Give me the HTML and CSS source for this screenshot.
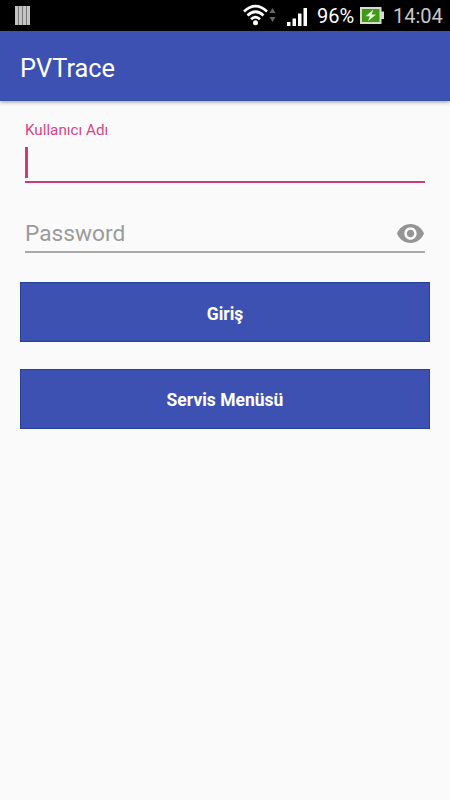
FILE: index.html
```html
<!DOCTYPE html>
<html lang="tr">
<head>
    <meta charset="UTF-8" />
    <meta name="viewport" content="width=device-width, initial-scale=1.0"/>
    <title>PVTrace</title>
    <link rel="stylesheet" href="styles.css">
</head>
<body>
<div class="status-bar">
    <svg class="bars" width="15" height="19" viewBox="0 0 15 19">
        <path fill="#777" d="M0 0h15v19H0z"/>
        <path fill="#c4c4c4" d="M0 0h3v19H0zM4 0h3v19H4zM8 0h3v19H8zM12 0h3v19h-3z"/>
    </svg>
    <svg class="wifi" width="34" height="22" viewBox="0 0 34 22">
        <g fill="none" stroke="#fff" stroke-width="2.7">
            <path d="M1 7.500Q12.500-3.200 24 7.500"/>
            <path d="M4.500 11.500Q12.500 4 20.500 11.500"/>
            <path d="M8 15.200Q12.500 11 17 15.200"/>
        </g>
        <circle cx="12.500" cy="18.700" r="2.500" fill="#fff"/>
        <path fill="#666" d="M26.500 9l3-5 3 5zM26.500 13l3 5 3-5z"/>
    </svg>
    <svg class="signal" width="21" height="18" viewBox="0 0 21 18">
        <path fill="#fff" d="M0 14h3.500v4H0zM5.500 10.500H9V18H5.500zM11 5.500h3.500V18H11zM16.500 0H20v18h-3.500z"/>
    </svg>
    <span class="percent">96%</span>
    <svg class="battery" width="24" height="17" viewBox="0 0 24 17">
        <path fill="#d5dccf" d="M0 0h21.500v4.500H24v7.500h-2.500V17H0z"/>
        <path fill="#3f9a16" d="M2 2h17.500v13H2z"/>
        <path fill="#e8f3df" d="M13.500 2.500L5.500 9.300h4.300L8 14.300l8-6.700h-4.500z"/>
    </svg>
    <span class="clock">14:04</span>
</div>
<header class="app-bar">
    <h1>PVTrace</h1>
</header>
<form class="login-form">
    <label class="field-label" for="username">Kullanıcı Adı</label>
    <div class="field field-active">
        <span class="caret"></span>
        <input type="text" id="username" name="username" />
    </div>
    <div class="field field-password">
        <input type="password" id="password" name="password" placeholder="Password" />
        <svg class="eye" width="27" height="19" viewBox="1 4.500 22 15" preserveAspectRatio="none">
            <path fill="#959595" d="M12 4.500C7 4.500 2.730 7.610 1 12c1.730 4.390 6 7.500 11 7.500s9.270-3.110 11-7.500c-1.730-4.390-6-7.500-11-7.500zM12 17c-2.760 0-5-2.240-5-5s2.240-5 5-5 5 2.240 5 5-2.240 5-5 5zm0-8c-1.660 0-3 1.340-3 3s1.340 3 3 3 3-1.340 3-3-1.340-3-3-3z"/>
        </svg>
    </div>
    <button type="submit">Giriş</button>
    <button type="button">Servis Menüsü</button>
</form>
</body>
</html>
```

FILE: styles.css
```css
* {
    box-sizing: border-box;
}
body {
    font-family: Roboto, sans-serif;
    background: #fafafa;
    margin: 0;
    min-height: 100vh;
}
.status-bar {
    display: flex;
    align-items: flex-start;
    height: 31px;
    padding: 0 7px 0 15px;
    background: #000;
    color: #fff;
}
.bars {
    margin-top: 6px;
}
.wifi {
    margin: 4px 0 0 auto;
}
.signal {
    margin: 8px 0 0 10px;
}
.percent {
    width: 38px;
    margin-left: 9px;
    font-size: 20px;
    line-height: 32px;
    white-space: nowrap;
}
.battery {
    margin: 7px 0 0 5px;
}
.clock {
    width: 50px;
    margin-left: 9px;
    color: #c8c8c8;
    font-size: 20px;
    line-height: 32px;
    white-space: nowrap;
}
.app-bar {
    display: flex;
    align-items: center;
    height: 70px;
    padding: 4px 20px 0;
    background: #3d51b3;
    box-shadow: 0 1px 4px rgba(0, 0, 0, 0.4);
}
h1 {
    margin: 0;
    color: #fff;
    font-size: 25.4px;
    font-weight: 400;
}
.login-form {
    padding: 20px 20px 0;
}
.field-label {
    display: block;
    margin: 0 5px;
    color: #d64583;
    font-size: 15.2px;
    line-height: 18px;
}
.field {
    display: flex;
    align-items: center;
    margin: 0 5px;
}
.field-active {
    height: 44px;
    padding-top: 5px;
    border-bottom: 2px solid #cb3d78;
}
.caret {
    width: 2.5px;
    height: 31px;
    background: #cb3d78;
}
.field-password {
    height: 40px;
    margin-top: 30px;
    padding-top: 3px;
    border-bottom: 2px solid #aaa;
}
input {
    flex: 1;
    min-width: 0;
    padding: 0;
    border: none;
    outline: none;
    background: transparent;
    font-family: inherit;
    font-size: 22.7px;
}
input::placeholder {
    color: #9b9b9b;
}
.eye {
    margin-right: 1.5px;
}
button {
    display: block;
    width: 100%;
    height: 60px;
    margin: 29px 0 0;
    padding: 3px 0 0;
    background: #3d51b3;
    color: #fff;
    border: 1px solid #26409f;
    font-family: inherit;
    font-size: 17.5px;
    font-weight: 700;
}
button + button {
    margin-top: 27px;
    padding-top: 1px;
}
```
